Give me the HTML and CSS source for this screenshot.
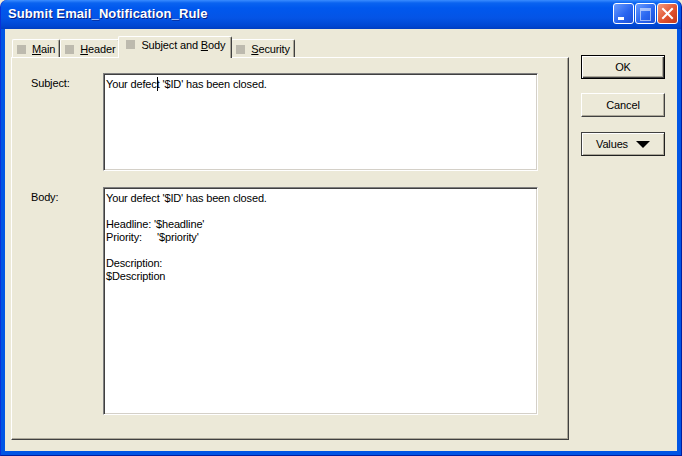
FILE: index.html
```html
<!DOCTYPE html>
<html>
<head>
<meta charset="utf-8">
<link rel="stylesheet" href="styles.css">
<title>Submit Email_Notification_Rule</title>
</head>
<body>
<div class="window">
  <div class="titlebar">
    <span class="title">Submit Email_Notification_Rule</span>
    <div class="caps">
      <span class="cap min"><i></i></span>
      <span class="cap max"><i></i></span>
      <span class="cap close">
        <svg width="21" height="21" viewBox="0 0 21 21"><path d="M6 6 L15 15 M15 6 L6 15" stroke="#fff" stroke-width="2" stroke-linecap="square"/></svg>
      </span>
    </div>
  </div>
  <div class="client">
    <div class="sheet">
      <div class="tabs">
        <div class="tab"><span class="box"></span><span><u>M</u>ain</span></div>
        <div class="tab"><span class="box"></span><span><u>H</u>eader</span></div>
        <div class="tab active"><span class="box"></span><span>Subject and <u>B</u>ody</span></div>
        <div class="tab"><span class="box"></span><span><u>S</u>ecurity</span></div>
      </div>
      <div class="panel">
        <div class="field">
          <label class="lbl">Subject:</label>
          <div class="edit subject">Your defec<span class="caret"></span>t '$ID' has been closed.</div>
        </div>
        <div class="field">
          <label class="lbl">Body:</label>
          <div class="edit body-text">
            <div>Your defect '$ID' has been closed.</div>
            <div>&nbsp;</div>
            <div>Headline: '$headline'</div>
            <div><span class="key">Priority:</span>'$priority'</div>
            <div>&nbsp;</div>
            <div>Description:</div>
            <div>$Description</div>
          </div>
        </div>
      </div>
    </div>
    <div class="actions">
      <button class="btn default">OK</button>
      <button class="btn">Cancel</button>
      <button class="btn dark">Values <span class="arrow"></span></button>
    </div>
  </div>
</div>
</body>
</html>
```

FILE: styles.css
```css
html, body { margin: 0; padding: 0; }

body {
  width: 682px;
  height: 456px;
  overflow: hidden;
  background: #ECE9D8;
  font-family: "Liberation Sans", Arial, sans-serif;
  font-size: 11px;
  letter-spacing: -0.15px;
  color: #000;
}

.window {
  width: 682px;
  height: 456px;
  box-sizing: border-box;
  background: #0055E5;
  border-radius: 7px 7px 0 0;
  padding: 0 4px 4px;
  display: flex;
  flex-direction: column;
  border-left: 1px solid #0831D9;
  border-right: 1px solid #001EA0;
  border-bottom: 1px solid #001EA0;
}

.titlebar {
  height: 29px;
  margin: 0 -4px;
  padding: 0 3px 0 7px;
  display: flex;
  align-items: center;
  justify-content: space-between;
  border-radius: 7px 7px 0 0;
  background: linear-gradient(#3A8CFF 0, #0A63F0 3px, #0058EE 8px, #0454E6 18px, #0046D2 26px, #003DC0 29px);
}

.title {
  color: #fff;
  font-weight: bold;
  font-size: 13px;
  letter-spacing: 0.1px;
  text-shadow: 1px 1px 0 #0A1E80;
  padding-bottom: 2px;
}

.caps { display: flex; gap: 1px; padding-bottom: 2px; }

.cap {
  width: 21px;
  height: 21px;
  box-sizing: border-box;
  border: 1px solid #fff;
  border-radius: 3px;
  background: linear-gradient(135deg, #6A9CFF, #2A66F0 55%, #1C4FD8);
  position: relative;
  display: block;
}

.cap.min i {
  position: absolute;
  left: 4px;
  top: 13px;
  width: 6px;
  height: 3px;
  background: #fff;
}

.cap.max i {
  position: absolute;
  left: 4px;
  top: 4px;
  width: 9px;
  height: 9px;
  border: 1px solid #fff;
  border-top-width: 3px;
  opacity: 0.55;
}

.cap.close {
  background: linear-gradient(135deg, #F39A7E, #E1532F 55%, #C2381A);
}

.cap.close svg { position: absolute; left: -1px; top: -1px; }

.client {
  flex: 1;
  background: #ECE9D8;
  display: flex;
  padding: 6px 0 11px 6px;
}

.sheet {
  width: 558px;
  display: flex;
  flex-direction: column;
}

.tabs {
  display: flex;
  align-items: flex-end;
  height: 22px;
  padding-left: 1px;
  position: relative;
  z-index: 1;
}

.tab {
  height: 18px;
  box-sizing: border-box;
  padding: 2px 4px 0 4px;
  border-top: 1px solid #fff;
  border-left: 1px solid #fff;
  border-right: 1px solid #404040;
  box-shadow: inset -1px 0 0 #ACA899;
  border-radius: 2px 2px 0 0;
  display: flex;
  align-items: center;
  gap: 6px;
  line-height: 13px;
  white-space: nowrap;
  margin-top: 4px;
}

.tab.active {
  height: 22px;
  margin: 0 -1px -1px -2px;
  padding: 0 6px 4px 7px;
  background: #ECE9D8;
  position: relative;
}

.box {
  width: 9px;
  height: 9px;
  background: #BDBAAE;
  display: inline-block;
}

.tab.active .box { margin-top: -2px; }

.panel {
  flex: 1;
  box-sizing: border-box;
  border-top: 1px solid #fff;
  border-left: 1px solid #fff;
  border-right: 1px solid #404040;
  border-bottom: 1px solid #404040;
  box-shadow: inset -1px -1px 0 #ACA899;
  padding: 15px 30px 0 19px;
  display: flex;
  flex-direction: column;
  gap: 16px;
}

.field { display: flex; }

.lbl {
  width: 72px;
  padding-top: 4px;
  line-height: 13px;
}

.edit {
  width: 435px;
  box-sizing: border-box;
  background: #fff;
  border-top: 1px solid #808080;
  border-left: 1px solid #808080;
  border-right: 1px solid #fff;
  border-bottom: 1px solid #fff;
  box-shadow: inset 1px 1px 0 #404040, inset -1px -1px 0 #D4D0C8;
  padding: 3px 4px 0 2px;
  line-height: 13px;
}

.subject { height: 98px; }
.body-text { height: 228px; padding-top: 4px; }

.caret {
  display: inline-block;
  width: 1px;
  height: 14px;
  background: #000;
  vertical-align: -3px;
  margin-right: -1px;
}

.key { display: inline-block; width: 51px; }

.actions {
  display: flex;
  flex-direction: column;
  gap: 14px;
  padding: 20px 0 0 12px;
}

.btn {
  width: 84px;
  height: 24px;
  box-sizing: border-box;
  font-family: inherit;
  font-size: 11px;
  letter-spacing: -0.15px;
  color: #000;
  background: #ECE9D8;
  border-top: 1px solid #fff;
  border-left: 1px solid #fff;
  border-right: 1px solid #404040;
  border-bottom: 1px solid #404040;
  box-shadow: inset -1px -1px 0 #ACA899;
  padding: 0;
  display: flex;
  align-items: center;
  justify-content: center;
  gap: 8px;
}

.btn.default {
  border: 1px solid #000;
  box-shadow: inset 1px 1px 0 #fff, inset -1px -1px 0 #404040, inset -2px -2px 0 #ACA899;
}

.btn.dark {
  border: 1px solid #202020;
  border-top-color: #404040;
  border-left-color: #404040;
  box-shadow: inset 1px 1px 0 #fff, inset -1px -1px 0 #ACA899;
  margin-top: 1px;
}

.arrow {
  width: 0;
  height: 0;
  border-left: 7px solid transparent;
  border-right: 7px solid transparent;
  border-top: 7px solid #000;
}
```
